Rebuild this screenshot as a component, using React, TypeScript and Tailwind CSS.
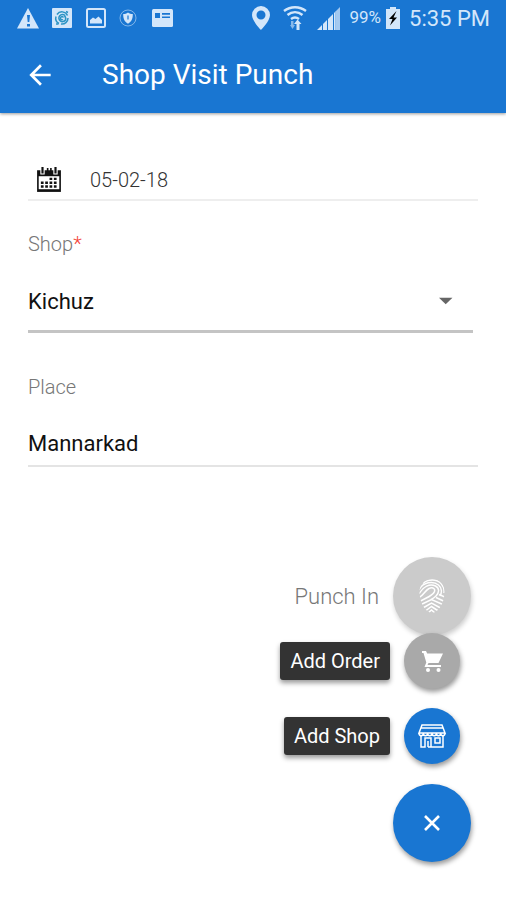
import { useState } from "react";
import type { ReactNode } from "react";
import { MdArrowBack } from "react-icons/md";

const shops = ["Kichuz", "City Store", "Corner Mart"];

function StatusBar() {
  return (
    <div className="flex h-9 items-center justify-between pl-4 pr-4 text-[#d3e6fa]">
      <div className="flex items-center gap-3">
        {/* Warning */}
        <svg className="h-6 w-6" viewBox="0 0 24 24">
          <path d="M12 2 23 22.500H1z" fill="currentColor" />
          <path d="M11 9h3l-.7 7h-1.600zM11 18h3v2.500h-3z" fill="#1976d2" />
        </svg>
        {/* App badge */}
        <svg className="h-5 w-5" viewBox="0 0 20 20">
          <rect width="20" height="20" rx="1" fill="currentColor" />
          <g fill="none" stroke="#2b93c4" strokeWidth="1.500">
            <path d="M15.500 7.500A6 6 0 0 0 5 6.500M4 8.500a6 6 0 0 0 3 7M9 16a6 6 0 0 0 7-6" />
            <path d="M13 7.500a3.600 3.600 0 1 0 .5 4.500c.8-1.500 0-3-1-4.500" />
            <path d="M11.500 9.500a1.600 1.600 0 1 0-.5 2M4 16h2.500M14 3.500l2 1" />
          </g>
        </svg>
        {/* Picture */}
        <svg className="ml-0.5 h-5 w-5" viewBox="0 0 20 20">
          <rect x="1" y="1" width="18" height="18" rx="1.500" fill="none" stroke="currentColor" strokeWidth="2" />
          <path d="M4 15.500V12l3-2.500 2.500 1.500 3-2.500L16 12v3.500z" fill="currentColor" />
        </svg>
        {/* Shield */}
        <svg className="h-5 w-5" viewBox="0 0 20 20">
          <circle cx="10" cy="10" r="8" fill="none" stroke="currentColor" strokeWidth=".8" opacity=".7" />
          <path d="M10 4.500c1.500 1 3 1.500 4.800 1.500 0 4-.8 7.500-4.800 9.700C6 13.500 5.200 10 5.200 6 7 6 8.500 5.500 10 4.500z" fill="currentColor" />
          <path d="M10 7.500v4" stroke="#1976d2" strokeWidth="1.200" />
        </svg>
        {/* Contact card */}
        <svg className="h-5 w-6" viewBox="0 0 24 20">
          <rect x="2" y="1" width="21" height="18" rx="1.500" fill="currentColor" />
          <path d="M5 5h5v5H5zM12 5h8v1.800h-8zM12 8.500h8v1.500h-8z" fill="#1976d2" />
        </svg>
      </div>

      <div className="flex items-center gap-2">
        {/* Location */}
        <svg className="mr-1 h-6 w-5" viewBox="0 0 20 24">
          <path
            d="M10 0a9 9 0 0 0-9 9c0 6 9 15 9 15s9-9 9-15a9 9 0 0 0-9-9zm0 4.500a4.500 4.500 0 1 1 0 9 4.500 4.500 0 0 1 0-9z"
            fill="currentColor"
            fillRule="evenodd"
          />
        </svg>
        {/* Wi-Fi */}
        <svg className="mr-0.5 h-6 w-6" viewBox="0 0 24 24">
          <g fill="none" stroke="currentColor" strokeWidth="2.400">
            <path d="M1 5c6.500-5 15.500-5 22 0M4.500 9c4.500-3.800 10.500-3.800 15 0M8 13c2.500-2 5.500-2 8 0" />
          </g>
          <path d="M8 15h2.500v4H12l-2.500 4L7 19h1z" fill="currentColor" opacity=".6" />
          <path d="M14.500 13.500l4 4.500h-2v6h-3v-6h-2.500z" fill="currentColor" />
        </svg>
        {/* Signal */}
        <svg className="h-6 w-6" viewBox="0 0 24 24">
          <path d="M0 24l5-5v5zM6 18l4-4v10H6zM11 13l5-5v16h-5zM17 7l1.500-1.500V24H17z" fill="currentColor" />
          <path d="M18.500 5.500L23 1v23h-4.500z" fill="currentColor" opacity=".75" />
        </svg>
        <span className="text-[17px]">99%</span>
        {/* Battery */}
        <svg className="-ml-1 h-6 w-4" viewBox="0 0 16 24">
          <path d="M5 1h6v2h4v20H1V3h4z" fill="currentColor" />
          <path d="M11.500 5L4 13h3.500L5 19.500l7-8H8.500z" fill="#000" />
        </svg>
        <span className="text-[22px] whitespace-nowrap">5:35 PM</span>
      </div>
    </div>
  );
}

function CalendarIcon() {
  return (
    <svg className="size-[26px] shrink-0" viewBox="0 0 24 24">
      <path d="M1 3h22v20H1z" fill="#111" />
      <path d="M2.500 8.500h19v12h-19z" fill="#fff" />
      <path d="M4 0h4v7H4zM16 0h4v7h-4z" fill="#fff" />
      <path d="M5 0h2v6H5zM17 0h2v6h-2zM10 1h1.500v3H10zM13 1h1.500v3H13z" fill="#111" />
      <path
        d="M12.500 11H15M16.500 11H19M4.500 14.500H7M8.500 14.500H11M12.500 14.500H15M16.500 14.500H19M4.500 18H7M8.500 18H11M12.500 18H15M16.500 18H19"
        stroke="#111"
        strokeWidth="2.200"
      />
    </svg>
  );
}

function FingerprintIcon() {
  return (
    <svg className="h-9 w-7" viewBox="0 0 28 36" fill="none" stroke="#fff" strokeWidth="1.500">
      <clipPath id="print">
        <path d="M14 1C6 1 1.500 7 1.500 14c0 9 4.500 20 12.500 21 8-1 12.500-12 12.500-21C26.500 7 22 1 14 1z" />
      </clipPath>
      <g clipPath="url(#print)">
        <path d="M5 5.500C10 .8 19 .8 23.500 6c2 2.500 3 5.500 2.500 9" />
        <path d="M1 12C5 4 15 2.500 20.500 7c3.500 3 3.500 7.500 1.500 11" />
        <path d="M1 16C5 8.500 12 5 17.500 8c4.500 2.500 3.500 7 .5 10-2 2-3.500 2.700-5 3.500" />
        <path d="M1 19.500c5-2.500 6-7 10-9 4-1.800 7 .5 5 4-2.500 4-9 5.500-15 9.500" />
        <path d="M2 27l11.500-5.500L26 27M4 30.500l9.500-5.500L23.500 30.500M6 34l7.500-5.500L22 34M9 36l4.500-4 4.500 4" />
        <path d="M18 19.500l8.500 4M21 16.500l6 2.500" />
      </g>
    </svg>
  );
}

function CartIcon() {
  return (
    <svg className="h-6 w-6" viewBox="0 0 24 24" fill="#fff">
      <path d="M2 2h4l1.200 2.500H23L18.500 14H8.500l-1 2H21v2H4.500l1.800-4.500L3.500 4H2z" />
      <circle cx="8" cy="21" r="2" />
      <circle cx="18.500" cy="21" r="2" />
    </svg>
  );
}

function StoreIcon() {
  return (
    <svg className="h-7 w-7" viewBox="0 0 28 28" fill="none" stroke="#fff" strokeWidth="1.500">
      <path d="M4 3h20l3 8H1zM3.500 6h21" />
      <path d="M1 11c0 3.500 4.300 3.500 4.300 0 0 3.500 4.300 3.500 4.300 0 0 3.500 4.400 3.500 4.400 0 0 3.500 4.400 3.500 4.400 0 0 3.500 4.300 3.500 4.300 0 0 3.500 4.300 3.500 4.300 0" />
      <path d="M3 13v12h4v-9h6v9h12V13M10 25v-6M13 25h-3M17 16h5v5h-5z" />
    </svg>
  );
}

function CloseIcon() {
  return (
    <svg className="h-6 w-6" viewBox="0 0 24 24" stroke="#fff" strokeWidth="2.600">
      <path d="M5 5l14 14M19 5L5 19" />
    </svg>
  );
}

function MiniAction({ label, color, children }: { label: string; color: string; children: ReactNode }) {
  return (
    <div className="mr-[11px] flex items-center gap-[14px]">
      <span className="flex h-[38px] items-center rounded-[3px] bg-[#333] px-[10px] text-xl text-white shadow-[0_3px_5px_rgba(0,0,0,0.4)]">
        {label}
      </span>
      <button
        aria-label={label}
        className={`flex size-14 items-center justify-center rounded-full shadow-[1px_3px_5px_rgba(0,0,0,0.4)] ${color}`}
      >
        {children}
      </button>
    </div>
  );
}

export default function App() {
  const [date, setDate] = useState("05-02-18");
  const [shop, setShop] = useState("Kichuz");
  const [place, setPlace] = useState("Mannarkad");

  return (
    <div className="min-h-screen bg-white font-[Roboto,sans-serif]">
      <header className="bg-[#1976d2] shadow-[0_1px_3px_rgba(0,0,0,0.4)]">
        <StatusBar />
        <div className="flex h-[77px] items-center gap-[46px] pl-6">
          <button aria-label="Back" className="text-white">
            <MdArrowBack className="size-8" />
          </button>
          <h1 className="text-[28px] text-white">Shop Visit Punch</h1>
        </div>
      </header>

      <form className="flex flex-col px-7 pt-12">
        {/* Date */}
        <label className="flex h-10 items-center gap-7 border-b-2 border-[#eee] pl-2">
          <CalendarIcon />
          <input
            aria-label="Date"
            className="w-full text-xl font-light text-[#333] outline-none"
            value={date}
            onChange={(e) => setDate(e.target.value)}
          />
        </label>

        {/* Shop */}
        <label htmlFor="shop" className="mt-[29px] text-xl font-light text-[#777]">
          Shop<span className="text-[#f44336]">*</span>
        </label>
        <div className="mr-[5px] mt-[14px] flex h-[61px] items-center border-b-[3px] border-[#c4c4c4] pr-5">
          <select
            id="shop"
            className="w-full appearance-none text-[22px] text-[#111] outline-none"
            value={shop}
            onChange={(e) => setShop(e.target.value)}
          >
            {shops.map((name) => (
              <option key={name}>{name}</option>
            ))}
          </select>
          <svg className="h-2 w-4" viewBox="0 0 16 8">
            <path d="M1 0.500h14L8 7.500z" fill="#666" />
          </svg>
        </div>

        {/* Place */}
        <label htmlFor="place" className="mt-10 text-xl font-light text-[#777]">
          Place
        </label>
        <input
          id="place"
          className="mt-5 h-[46px] w-full border-b-2 border-[#e4e4e4] text-[22px] text-[#111] outline-none"
          value={place}
          onChange={(e) => setPlace(e.target.value)}
        />
      </form>

      {/* Actions */}
      <div className="flex flex-col items-end pb-9 pr-[35px] pt-[90px]">
        <div className="flex items-center gap-[14px]">
          <span className="text-[22px] font-light text-[#777]">Punch In</span>
          <button
            aria-label="Punch In"
            className="flex size-[78px] items-center justify-center rounded-full bg-[#cbcbcb] shadow-[1px_3px_5px_rgba(0,0,0,0.2)]"
          >
            <FingerprintIcon />
          </button>
        </div>
        <div className="-mt-0.5 mb-5 flex flex-col items-end gap-[19px]">
          <MiniAction label="Add Order" color="bg-[#a9a9a9]">
            <CartIcon />
          </MiniAction>
          <MiniAction label="Add Shop" color="bg-[#1976d2]">
            <StoreIcon />
          </MiniAction>
        </div>
        <button
          aria-label="Close menu"
          className="flex size-[78px] items-center justify-center rounded-full bg-[#1976d2] shadow-[1px_3px_5px_rgba(0,0,0,0.4)]"
        >
          <CloseIcon />
        </button>
      </div>
    </div>
  );
}
